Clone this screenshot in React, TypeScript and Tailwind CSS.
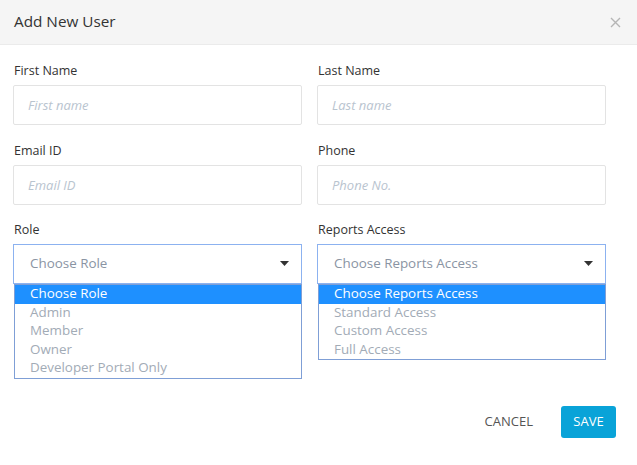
import React from "react";

const font = { fontFamily: '"Open Sans", "Noto Sans", sans-serif' };

function TextField({ label, placeholder }: { label: string; placeholder: string }) {
  return (
    <div className="flex flex-col">
      <label className="pl-[1px] text-[12.5px] leading-[18px] text-[#333]">{label}</label>
      <input
        placeholder={placeholder}
        className="mt-[5px] h-[40px] w-full rounded-[2px] border border-[#e3e3e3] bg-white px-[14px] text-[13px] italic outline-none placeholder:text-[#b9c4cf]"
      />
    </div>
  );
}

function OpenSelect({ label, value, options }: { label: string; value: string; options: string[] }) {
  return (
    <div className="flex flex-col">
      <label className="pl-[1px] text-[12.5px] leading-[18px] text-[#333]">{label}</label>
      <div className="relative mt-[5px]">
        <div className="flex h-[40px] w-full items-center justify-between border border-[#8cb2f0] bg-white pl-[16px] pr-[12px] text-[13.4px] text-[#8a94a3]">
          <span className="-mt-[2px]">{value}</span>
          <svg width="9" height="5" viewBox="0 0 9 5" className="mb-[1px]">
            <path d="M0 0h9L4.5 5z" fill="#333" />
          </svg>
        </div>
        <ul className="absolute left-[1px] right-0 top-full z-10 border border-[#7f9fd6] bg-white text-[13.4px] leading-[18.5px] text-[#a2abb6]">
          {options.map((o, i) => (
            <li
              key={o}
              className={i === 0 ? "bg-[#1e90ff] pl-[15px] text-white" : "pl-[15px]"}
            >
              <span className="relative -top-[1px]">{o}</span>
            </li>
          ))}
        </ul>
      </div>
    </div>
  );
}

export default function App() {
  return (
    <div className="h-[465px] w-[637px] bg-white" style={font}>
      <div className="flex h-[45px] items-center justify-between border-b border-[#ebebeb] bg-[#f5f5f5] pl-[14px] pr-[16px]">
        <h1 className="-mt-[2px] text-[15.3px] text-[#333]">Add New User</h1>
        <svg width="11" height="11" viewBox="0 0 11 11">
          <path d="M1 1l9 9M10 1l-9 9" stroke="#b5b5b5" strokeWidth="1.4" />
        </svg>
      </div>

      <div className="grid grid-cols-2 gap-x-[15px] pl-[13px] pr-[31px] pt-[17px]">
        <TextField label="First Name" placeholder="First name" />
        <TextField label="Last Name" placeholder="Last name" />
      </div>
      <div className="grid grid-cols-2 gap-x-[15px] pl-[13px] pr-[31px] pt-[17px]">
        <TextField label="Email ID" placeholder="Email ID" />
        <TextField label="Phone" placeholder="Phone No." />
      </div>
      <div className="grid grid-cols-2 gap-x-[15px] pl-[13px] pr-[31px] pt-[16px]">
        <OpenSelect
          label="Role"
          value="Choose Role"
          options={["Choose Role", "Admin", "Member", "Owner", "Developer Portal Only"]}
        />
        <OpenSelect
          label="Reports Access"
          value="Choose Reports Access"
          options={["Choose Reports Access", "Standard Access", "Custom Access", "Full Access"]}
        />
      </div>

      <div className="mt-[122px] flex items-center justify-end gap-[16px] pr-[21px]">
        <button className="px-[12px] text-[13px] text-[#555]">CANCEL</button>
        <button className="h-[32px] w-[55px] rounded-[3px] bg-[#09a3d8] text-[13px] text-white">
          SAVE
        </button>
      </div>
    </div>
  );
}
